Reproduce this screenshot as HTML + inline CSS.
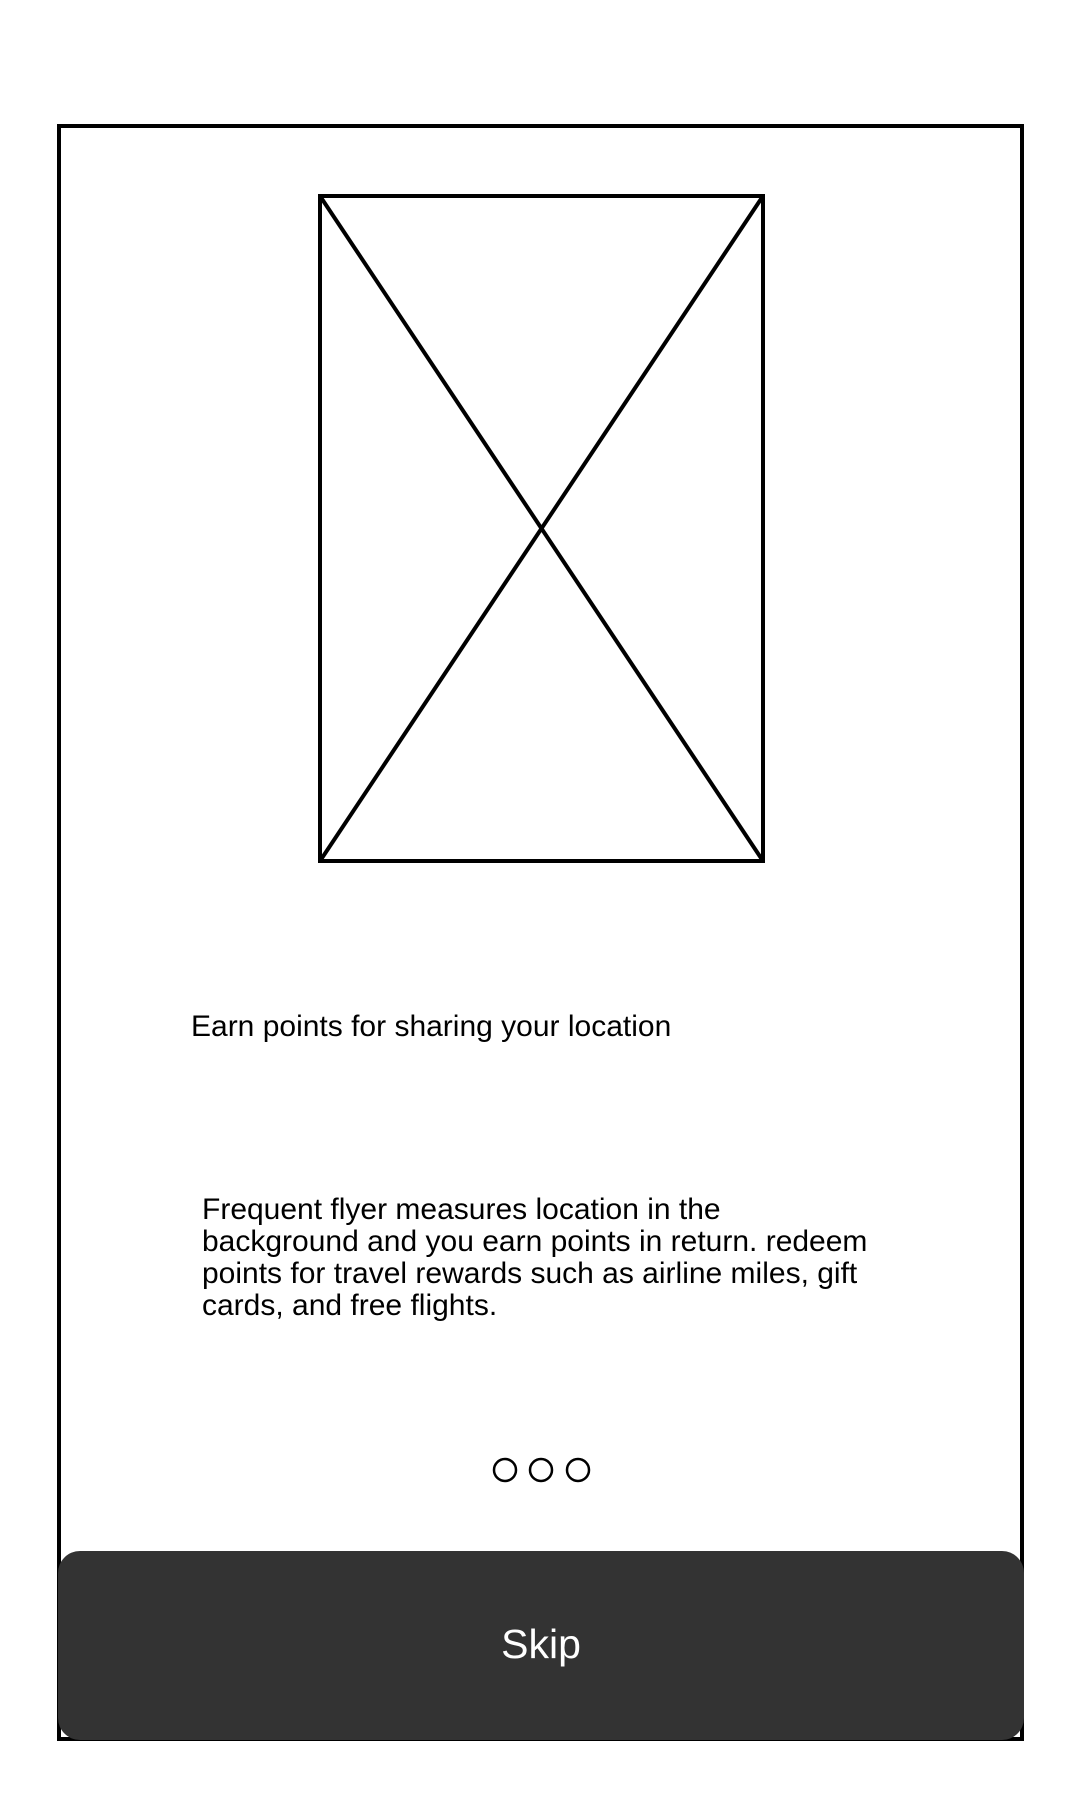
<!DOCTYPE html>
<html><head><style>
html,body{margin:0;padding:0;background:#fff;}
body{width:1080px;height:1800px;position:relative;overflow:hidden;font-family:"Liberation Sans",Arial,sans-serif;color:#000;}
.frame{position:absolute;left:57px;top:124px;width:967px;height:1617px;box-sizing:border-box;border:4px solid #000;}
.t{position:absolute;left:191px;top:1010px;font-size:30px;line-height:34px;white-space:nowrap;}
.p{position:absolute;left:202px;top:1194px;font-size:30px;line-height:32px;white-space:nowrap;}
.btn{position:absolute;left:58px;top:1551px;width:966px;height:189px;background:#333;border-radius:22px;color:#fff;font-size:41px;text-align:center;line-height:187px;}
svg{position:absolute;left:0;top:0;}
</style></head><body>
<div class="frame"></div>
<svg width="1080" height="1800">
<g stroke="#000" stroke-width="4" fill="none">
<rect x="320" y="196" width="443" height="665"/>
<line x1="320" y1="196" x2="763" y2="861"/>
<line x1="763" y1="196" x2="320" y2="861"/>
</g>
<g stroke="#000" stroke-width="2.5" fill="none">
<circle cx="505" cy="1470" r="11"/>
<circle cx="541" cy="1470" r="11"/>
<circle cx="578" cy="1470" r="11"/>
</g>
</svg>
<div class="t">Earn points for sharing your location</div>
<div class="p">Frequent flyer measures location in the<br>background and you earn points in return. redeem<br>points for travel rewards such as airline miles, gift<br>cards, and free flights.</div>
<div class="btn">Skip</div>
</body></html>
